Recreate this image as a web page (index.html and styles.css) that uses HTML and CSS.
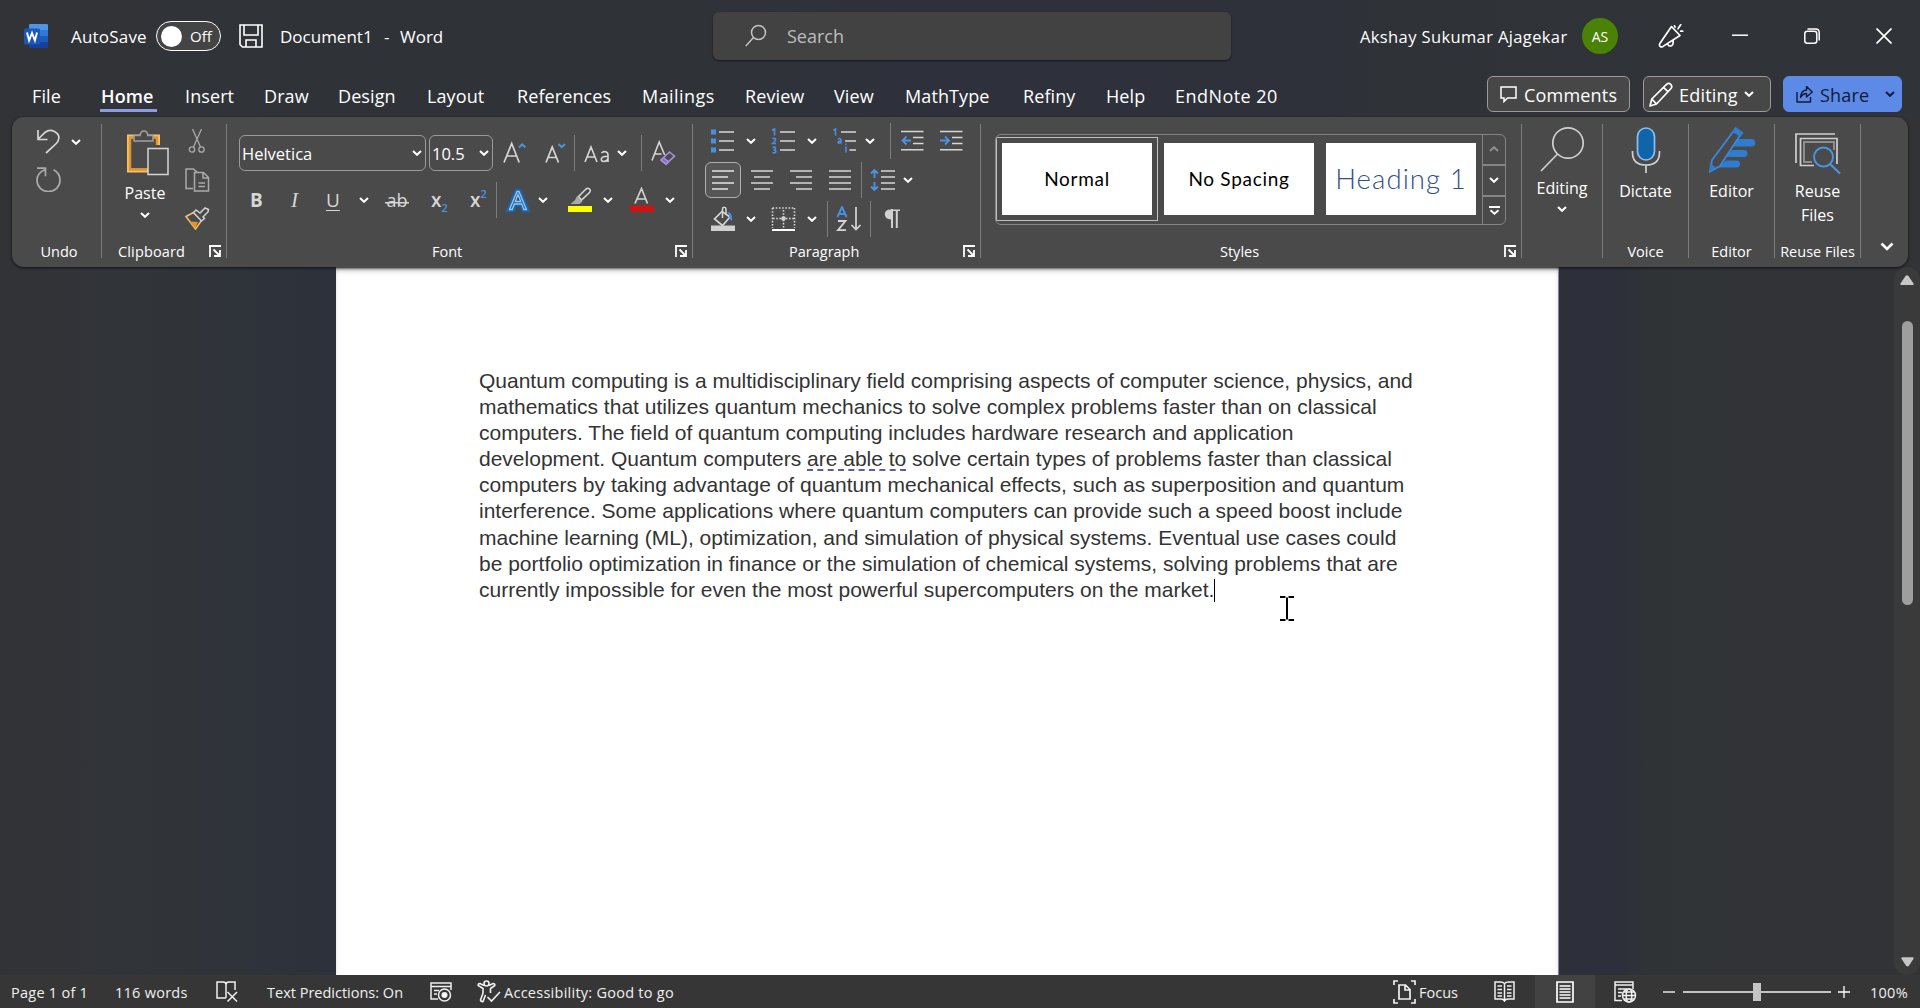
FILE: index.html
```html
<!DOCTYPE html>
<html lang="en">
<head>
<meta charset="utf-8">
<title>Document1 - Word</title>
<link rel="stylesheet" href="styles.css">
</head>
<body>
<svg class="defs" aria-hidden="true">
  <symbol id="chev" viewBox="0 0 10 6"><path d="M1 1l4 3.800L9 1" fill="none" stroke="currentColor" stroke-width="2"/></symbol>
  <symbol id="launch" viewBox="0 0 12 12"><path d="M1 12V1h11M4.500 4.500l5.500 5.500M11 5v6H5" fill="none" stroke="#fff" stroke-width="1.800"/></symbol>
</svg>

<header class="titlebar">
  <svg class="logo" width="24" height="24" viewBox="0 0 24 24"><path d="M6 0h17a1 1 0 0 1 1 1v5H5V1a1 1 0 0 1 1-1z" fill="#4f94e6"/><path d="M5 6h19v6H5z" fill="#2f7bd3"/><path d="M5 12h19v6H5z" fill="#1d5cbd"/><path d="M5 18h19v5a1 1 0 0 1-1 1H6a1 1 0 0 1-1-1z" fill="#173f9b"/><rect x="0" y="4.500" width="16" height="16" rx="1.500" fill="#1b58b4"/><path d="M3 8.500l2.100 8L8 9l2.900 7.500L13 8.500" fill="none" stroke="#fff" stroke-width="1.900"/></svg>
  <span class="autosave">AutoSave</span>
  <span class="toggle"><i></i><b>Off</b></span>
  <svg class="save" width="24" height="24" viewBox="0 0 24 24" fill="none" stroke="#fff" stroke-width="1.600"><path d="M1 1h22v22H3.500L1 20.500zM5 1v10h14V1M7 23v-7h10v7"/></svg>
  <span class="docname">Document1</span><span class="dash">-</span><span class="app">Word</span>
  <div class="search">
    <svg width="22" height="24" viewBox="0 0 22 24" fill="none" stroke="#c4c4c4" stroke-width="1.500"><circle cx="13.500" cy="8.500" r="7"/><path d="M8.500 13.500L.8 22"/></svg>
    <span>Search</span>
  </div>
  <span class="user">Akshay Sukumar Ajagekar</span>
  <span class="avatar">AS</span>
  <svg class="mega" width="26" height="26" viewBox="0 0 26 26" fill="none" stroke="#fff" stroke-width="1.700" stroke-linejoin="round" stroke-linecap="round"><path d="M13.500 3.500L2 20.200Q.8 22.500 2.300 23.600q1 .8 2.700-.2L22 12.500zM9.500 21q1.300 2.800 4 1.800 2.300-1.300 1.500-5.300M16.500 2.800l.6 1.200M22.700 1.800l-2.700 4M22.700 8.200h2"/></svg>
  <svg class="min" width="16" height="16" viewBox="0 0 16 16" stroke="#fff" stroke-width="1.500"><path d="M0 7.200h16"/></svg>
  <svg class="restore" width="16" height="16" viewBox="0 0 16 16" fill="none" stroke="#fff" stroke-width="1.500"><rect x=".8" y="3.200" width="12" height="12" rx="2.500"/><path d="M3.500 .9h8Q15.200.9 15.200 4.500v8"/></svg>
  <svg class="close" width="16" height="16" viewBox="0 0 16 16" stroke="#fff" stroke-width="1.700"><path d="M.5.500l15 15M15.500.500l-15 15"/></svg>
</header>

<nav class="tabs">
  <span>File</span><span class="active">Home</span><span>Insert</span><span>Draw</span><span>Design</span><span>Layout</span><span class="tight">References</span><span class="wide">Mailings</span><span>Review</span><span>View</span><span>MathType</span><span>Refiny</span><span>Help</span><span class="wide">EndNote 20</span>
  <div class="actions">
    <button class="btn comments"><svg width="17" height="17" viewBox="0 0 17 17" fill="none" stroke="#fff" stroke-width="1.500"><path d="M1 1h15v11H7.500L4 15.500V12H1z"/></svg><span>Comments</span></button>
    <button class="btn mode"><svg width="24" height="25" viewBox="0 0 24 25" fill="none" stroke="#fff" stroke-width="1.700" stroke-linejoin="round"><path d="M1 24l1.800-7L17.500 2.300q2.200-2 4.200 0t.3 4.200L7.500 22zM14.500 5.300l4.700 4.500M2.800 17l4.700 5"/></svg><span>Editing</span><svg class="chev"><use href="#chev"/></svg></button>
    <button class="btn share"><svg width="17" height="18" viewBox="0 0 17 18" fill="none" stroke="#0f1b38" stroke-width="1.400" stroke-linejoin="round"><path d="M1 7v10h13.500v-5M4.500 12.500Q5 5.500 10.500 5V1.500L16.300 7l-5.800 5V8.500Q7 8.500 4.500 12.500z"/></svg><span>Share</span><svg class="chev"><use href="#chev"/></svg></button>
  </div>
</nav>

<section class="ribbon">
  <div class="group g-undo">
    <div class="tools">
      <svg class="ic" width="25" height="26" viewBox="0 0 25 26" fill="none" stroke="#d6d6d6" stroke-width="1.700"><path d="M2 1v9.500h9.500M2.300 10L9 3.500Q13.500-.2 18.500 2.500t4.300 7q-.3 3-3 5.500L10 24"/></svg>
      <svg class="chev"><use href="#chev"/></svg>
      <svg class="ic redo" width="25" height="25" viewBox="0 0 25 25" fill="none" stroke="#aaa" stroke-width="1.700"><path d="M1 1.200h8.500v8M9.300 2.500Q1 5.500 1 13.500a11.500 11 0 0 0 23 0Q24 6 17.500 2.800"/></svg>
    </div>
    <div class="label"><span>Undo</span></div>
  </div>

  <div class="group g-clip">
    <div class="tools">
      <div class="paste">
        <svg width="42" height="46" viewBox="0 0 42 46" fill="none"><path d="M21 40.500H2V6.500h29V15" stroke="#f3c168" stroke-width="4"/><path d="M20 39.500H3V7.500h27V15" stroke="#e2942f" stroke-width="2.500"/><path d="M7 11V5.500h6Q13.500 1 17 1t3.800 4.500H26V11z" fill="#4a4a4a" stroke="#a0a0a0" stroke-width="1.500"/><rect x="21" y="18.500" width="20" height="26" fill="#4a4a4a" stroke="#d6d6d6" stroke-width="1.500"/></svg>
        <span>Paste</span><svg class="chev"><use href="#chev"/></svg>
      </div>
      <div class="clipcol">
        <svg width="24" height="24" viewBox="0 0 24 24" fill="none" stroke="#aaa" stroke-width="1.300"><path d="M7.500 0l8 18M16.500 0l-8 18"/><circle cx="7" cy="20.500" r="2.700"/><circle cx="16.500" cy="20.500" r="2.700"/></svg>
        <svg width="25" height="24" viewBox="0 0 25 24" fill="none" stroke="#aaa" stroke-width="1.500"><path d="M8 20.500H1V1h7.500l4 3.500M9.500 4.500h9l5 5V23h-14zM18 4.500V10h5.500M13.500 15h6.500M13.500 18.500h6.500"/></svg>
        <svg width="25" height="23" viewBox="0 0 25 23" fill="none"><path d="M1 9.500L8.500 5.500l8 8L10.500 22z" fill="#4a4a4a" stroke="#f3c168" stroke-width="1.500"/><path d="M4.500 14.500l8.500.5-2.700 6z" fill="#e2942f"/><path d="M8.500 5.500L11 3l4 3 5-5 3.500 1.500L23 5l-5 5 1.500 1.500-3 2.500z" fill="#4a4a4a" stroke="#d0d0d0" stroke-width="1.500"/></svg>
      </div>
    </div>
    <div class="label"><span>Clipboard</span><svg class="launch"><use href="#launch"/></svg></div>
  </div>

  <div class="group g-font">
    <div class="row fr1">
      <div class="combo"><span>Helvetica</span><svg class="chev"><use href="#chev"/></svg></div>
      <div class="combo sz"><span>10.5</span><svg class="chev"><use href="#chev"/></svg></div>
      <svg width="24" height="26" viewBox="0 0 24 26" fill="none" stroke="#d6d6d6" stroke-width="1.700"><path d="M1 22.500L8.700 3.500l7.500 19M3.700 16h10"/><path d="M16 7.500l3.200-3.200 3.200 3.200" stroke="#4a94e0" stroke-width="2"/></svg>
      <svg width="24" height="26" viewBox="0 0 24 26" fill="none" stroke="#d6d6d6" stroke-width="1.700"><path d="M1 22.500L7.200 7l6.300 15.500M3.300 17.500h8"/><path d="M13.500 4l3.200 3.200L20 4" stroke="#4a94e0" stroke-width="2"/></svg>
      <i class="sep"></i>
      <svg width="26" height="26" viewBox="0 0 26 26" fill="none" stroke="#d6d6d6" stroke-width="1.600"><path d="M1 22l6-15 6 15M3 17h8.300M17.500 13q1.500-1.800 4-1.200 2.500.6 2.500 3V22M24 16.200q-6-.2-6.700 2.800-.2 2.600 2.700 2.500 2.500 0 4-2.500"/></svg>
      <svg class="chev"><use href="#chev"/></svg>
      <i class="sep"></i>
      <svg width="26" height="26" viewBox="0 0 26 26" fill="none" stroke="#d6d6d6" stroke-width="1.600"><path d="M1 20.500L8.200 2l5.500 13M3.600 14h7"/><path d="M10 20l8.500-8 5 4.200-8.500 8z" stroke="#a491dc"/><path d="M10 20l2.500-2.300 5 4.200-2.500 2.300z" fill="#8268cc" stroke="#a491dc"/></svg>
    </div>
    <div class="row fr2">
      <b class="g">B</b><i class="g it">I</i><u class="g">U</u>
      <svg class="chev"><use href="#chev"/></svg>
      <span class="g ab">ab</span>
      <span class="g x">x<sub>2</sub></span>
      <span class="g x up">x<sup>2</sup></span>
      <i class="sep"></i>
      <svg width="24" height="25" viewBox="0 0 24 25" fill="none"><path d="M3.500 21.500L11 3.500h2L20.500 21.500h-2.700l-2-5.500H8.300l-2 5.500z" stroke="#1767b0" stroke-width="5.500"/><path d="M3.500 21.500L11 3.500h2L20.500 21.500h-2.700l-2-5.500H8.300l-2 5.500zM9.300 13.500h5.500L12 6.500z" stroke="#9cc8f2" stroke-width="1.300" fill="#1767b0"/></svg>
      <svg class="chev"><use href="#chev"/></svg>
      <svg width="26" height="26" viewBox="0 0 26 26" fill="none"><path d="M10.500 9.500L18 2q2-1.500 3.500 0t0 3.500L13.500 13z" stroke="#d6d6d6" stroke-width="1.600"/><path d="M9 9l5.500 5.500-3 2.500H2.500L7 13z" fill="#a9a9a9"/><path d="M0 19h24v6H0z" fill="#ff0"/></svg>
      <svg class="chev"><use href="#chev"/></svg>
      <svg width="26" height="26" viewBox="0 0 26 26" fill="none"><path d="M6 16.500L12.500 1.500l6 15M8.300 12h8.300" stroke="#d6d6d6" stroke-width="1.600"/><path d="M1 18.500h24V25H1z" fill="#cb1414"/></svg>
      <svg class="chev"><use href="#chev"/></svg>
    </div>
    <div class="label"><span>Font</span><svg class="launch"><use href="#launch"/></svg></div>
  </div>

  <div class="group g-para">
    <div class="row pr1">
      <svg width="24" height="24" viewBox="0 0 24 24"><path d="M1 .500h5v5H1zM1 9.500h5v5H1zM1 18.500h5v5H1z" fill="#4a8ee0"/><path d="M9 3h15M9 12h15M9 21h15" stroke="#d6d6d6" stroke-width="1.600"/></svg>
      <svg class="chev"><use href="#chev"/></svg>
      <svg width="25" height="26" viewBox="0 0 25 26" fill="none"><path d="M1 2.500L3.500 1v6.500M1.500 11q2-1.500 3 0 .5 1.500-3 4.500H5M1.500 19.500q3.200-1.200 3 .8 0 1.400-2 1.500 2.500.2 2.300 1.700-.4 2-3.500 1" stroke="#4a8ee0" stroke-width="1.600"/><path d="M9 4h15M9 13h15M9 22h15" stroke="#d6d6d6" stroke-width="1.600"/></svg>
      <svg class="chev"><use href="#chev"/></svg>
      <svg width="25" height="26" viewBox="0 0 25 26" fill="none"><path d="M1.500 2.500L3.500 1v6.500M6 11q3-1 3 1v3.500M9 13q-3 0-3 1.300 1 2 3 0M14 18.500v6M14 15.500v1.500" stroke="#4a8ee0" stroke-width="1.600"/><path d="M9 4h15M13 13h11M17.500 22H24" stroke="#d6d6d6" stroke-width="1.600"/></svg>
      <svg class="chev"><use href="#chev"/></svg>
      <i class="sep"></i>
      <svg width="23" height="24" viewBox="0 0 23 24" fill="none"><path d="M0 2.500h22.500M12 8.500h10.500M12 14.500h10.500M0 20.800h22.500" stroke="#d6d6d6" stroke-width="1.600"/><path d="M10 11.500H1.500M5.500 7.500l-4 4 4 4" stroke="#4a94e0" stroke-width="1.800"/></svg>
      <svg width="23" height="24" viewBox="0 0 23 24" fill="none"><path d="M0 2.500h22.500M12 8.500h10.500M12 14.500h10.500M0 20.800h22.500" stroke="#d6d6d6" stroke-width="1.600"/><path d="M0 11.500h9M5 7.500l4 4-4 4" stroke="#4a94e0" stroke-width="1.800"/></svg>
    </div>
    <div class="row pr2">
      <span class="sel"><svg width="22" height="22" viewBox="0 0 22 22" stroke="#e4e4e4" stroke-width="1.600"><path d="M0 2h22M0 8h16M0 14h22M0 20h16"/></svg></span>
      <svg width="22" height="22" viewBox="0 0 22 22" stroke="#d6d6d6" stroke-width="1.600"><path d="M0 2h22M3 8h16M0 14h22M3 20h16"/></svg>
      <svg width="22" height="22" viewBox="0 0 22 22" stroke="#d6d6d6" stroke-width="1.600"><path d="M0 2h22M6 8h16M0 14h22M6 20h16"/></svg>
      <svg width="22" height="22" viewBox="0 0 22 22" stroke="#d6d6d6" stroke-width="1.600"><path d="M0 2h22M0 8h22M0 14h22M0 20h22"/></svg>
      <i class="sep"></i>
      <svg width="25" height="24" viewBox="0 0 25 24" fill="none"><path d="M11 3h14M11 9h14M11 15h14M11 21h14" stroke="#d6d6d6" stroke-width="1.600"/><path d="M4.500 2v8M1 5.500L4.500 2 8 5.500M4.500 14v8M1 18.500L4.500 22 8 18.500" stroke="#4a94e0" stroke-width="1.900"/></svg>
      <svg class="chev"><use href="#chev"/></svg>
    </div>
    <div class="row pr3">
      <svg width="26" height="26" viewBox="0 0 26 26" fill="none"><path d="M12 5.500L4.500 13l8 6.500L20 11z" stroke="#d6d6d6" stroke-width="1.700"/><path d="M12.500 12V3q.2-2 2-1.700 1.500.2 1.500 2V8" stroke="#d6d6d6" stroke-width="1.500"/><path d="M17 6q6 0 5 9-3-1-3-6z" fill="#4a8ee0"/><path d="M1 19.500h24V25H1z" fill="#d0d0d0"/></svg>
      <svg class="chev"><use href="#chev"/></svg>
      <svg width="25" height="26" viewBox="0 0 25 26" fill="none" stroke="#d6d6d6" stroke-width="1.600"><path d="M1.500 2h22M1.500 2v20M23.500 2v20M12.500 4v18M2 12.500h21" stroke-dasharray="1.600 1.600"/><circle cx="12.500" cy="12.500" r="1.500"/><path d="M1 24h23" stroke="#fff" stroke-width="2"/></svg>
      <svg class="chev"><use href="#chev"/></svg>
      <i class="sep"></i>
      <svg width="26" height="26" viewBox="0 0 26 26" fill="none"><path d="M1.500 11L6 1l4.500 10M3 8h6.500" stroke="#4a8ee0" stroke-width="2"/><path d="M2 15h7.500L2 24.200h8" stroke="#d6d6d6" stroke-width="1.800"/><path d="M20 1v22.500M15.500 19l4.500 4.500L24.500 19" stroke="#d6d6d6" stroke-width="1.700"/></svg>
      <i class="sep"></i>
      <svg width="17" height="20" viewBox="0 0 17 20"><path d="M7 10.500Q.8 10.300.8 5.300T7 .500h9V2H7z" fill="#d0d0d0"/><path d="M7 0h2v19H7zM11.800 1h2v18h-2z" fill="#d0d0d0"/></svg>
    </div>
    <div class="label"><span>Paragraph</span><svg class="launch"><use href="#launch"/></svg></div>
  </div>

  <div class="group g-styles">
    <div class="gallery">
      <div class="pick"><div class="card">Normal</div></div>
      <div class="card c2">No Spacing</div>
      <div class="card c3">Heading 1</div>
      <div class="scroller">
        <span><svg class="chev dim up"><use href="#chev"/></svg></span>
        <span><svg class="chev"><use href="#chev"/></svg></span>
        <span><svg width="11" height="9" viewBox="0 0 11 9" fill="none" stroke="#fff" stroke-width="1.800"><path d="M0 1h11M1.500 4.200l4 3.500 4-3.500"/></svg></span>
      </div>
    </div>
    <div class="label"><span>Styles</span><svg class="launch"><use href="#launch"/></svg></div>
  </div>

  <div class="group big g-edit">
    <svg width="46" height="46" viewBox="0 0 46 46" fill="none" stroke="#d0d0d0" stroke-width="1.700"><circle cx="29" cy="17" r="15.200"/><path d="M18.500 28L2 45"/></svg>
    <span>Editing</span><svg class="chev"><use href="#chev"/></svg>
  </div>
  <div class="group big">
    <svg width="30" height="48" viewBox="0 0 30 48" fill="none"><rect x="6.500" y="2" width="17" height="32" rx="8.500" fill="#1065a8" stroke="#8fbdf0" stroke-width="1.700"/><path d="M1.500 25v1.500q0 12.500 13.500 12.500t13.500-12.500V25M15 39v8" stroke="#d0d0d0" stroke-width="1.700"/></svg>
    <span>Dictate</span>
    <div class="label"><span>Voice</span></div>
  </div>
  <div class="group big">
    <svg width="48" height="48" viewBox="0 0 48 48"><path d="M30 13h13.500a3.500 3.500 0 0 1 0 7.500H24zM24 24h12a3.500 3.500 0 0 1 0 7H18zM18 34.500h10.500a3.500 3.500 0 0 1 0 7H10z" fill="#2f7dd0"/><path d="M27.500 2.500l6 4.500L12 40 2 45.500 4 34z" fill="#4a4a4a" stroke="#3a88dc" stroke-width="1.800"/><path d="M27.500 1l8 5.500-3 4.500-8-5z" fill="#2f7dd0"/><path d="M2 37l5.500 4L1.500 46z" fill="#2f7dd0"/></svg>
    <span>Editor</span>
    <div class="label"><span>Editor</span></div>
  </div>
  <div class="group big">
    <svg width="46" height="48" viewBox="0 0 46 48" fill="none" stroke="#d0d0d0" stroke-width="1.700"><path d="M1 37V8h39M19 39.500H5.500V12.500H42V38"/><path d="M17 36H9V16h30v8" stroke="#8d8d8d" stroke-width="2"/><circle cx="28.500" cy="31" r="9.500" stroke="#4a94e0" stroke-width="1.900" fill="#4a4a4a"/><path d="M35 38l10 9.500" stroke="#4a94e0" stroke-width="2.200"/></svg>
    <span>Reuse<br>Files</span>
    <div class="label"><span>Reuse Files</span></div>
  </div>
  <div class="collapse"><svg width="14" height="9" viewBox="0 0 14 9"><path d="M1.500 1.500L7 7l5.500-5.500" fill="none" stroke="#fff" stroke-width="2.600"/></svg></div>
</section>

<main class="workspace">
  <article class="page">
    <p>Quantum computing is a multidisciplinary field comprising aspects of computer science, physics, and<br>mathematics that utilizes quantum mechanics to solve complex problems faster than on classical<br>computers. The field of quantum computing includes hardware research and application<br>development. Quantum computers <span class="gram">are able to</span> solve certain types of problems faster than classical<br>computers by taking advantage of quantum mechanical effects, such as superposition and quantum<br>interference. Some applications where quantum computers can provide such a speed boost include<br>machine learning (ML), optimization, and simulation of physical systems. Eventual use cases could<br>be portfolio optimization in finance or the simulation of chemical systems, solving problems that are<br>currently impossible for even the most powerful supercomputers on the market.<span class="caret"></span></p>
    <svg class="ibeam" width="14" height="25" viewBox="0 0 14 25" fill="none" stroke="#000" stroke-width="2"><path d="M0 1h5.500M8.500 1H14M7 1.500v22M0 24h5.500M8.500 24H14"/></svg>
  </article>
  <aside class="scroll">
    <svg width="14" height="10" viewBox="0 0 14 10"><path d="M5.500 1Q7-.700 8.500 1L13.500 8.500Q14 10 12.500 10h-11Q0 10 .5 8.500z" fill="#c6c6c6"/></svg>
    <div class="thumb"></div>
    <svg width="13" height="10" viewBox="0 0 14 10"><path d="M5.500 9Q7 10.700 8.500 9L13.500 1.500Q14 0 12.500 0h-11Q0 0 .5 1.500z" fill="#c6c6c6"/></svg>
  </aside>
</main>

<footer class="status">
  <span class="loose">Page 1 of 1</span>
  <span class="loose">116 words</span>
  <svg width="22" height="21" viewBox="0 0 22 21" fill="none" stroke="#f0f0f0" stroke-width="1.500"><path d="M10 17H1V1h6q3 0 3 2.500V17M10 3.500Q10 1 13 1h6v8M11.500 11l9.500 9.500M21 11l-9.500 9.500"/></svg>
  <span>Text Predictions: On</span>
  <svg width="22" height="20" viewBox="0 0 22 20" fill="none" stroke="#f0f0f0" stroke-width="1.500"><path d="M8 17H1V1h20v7M1 4.500h20M4 8.500h5M4 12h3"/><circle cx="14.500" cy="13" r="6"/><circle cx="14.500" cy="13" r="2.300" fill="#fff"/></svg>
  <svg width="24" height="23" viewBox="0 0 24 23" fill="none" stroke="#f0f0f0" stroke-width="1.600"><circle cx="9.500" cy="3.500" r="2.500"/><path d="M7 5.500L3 3.500Q.8 3.500 1.200 5.500L6 8.500V13L3.500 20Q4 22 6 21.500L8.500 15M12 5.500l4-2q2.200 0 1.800 2L13.500 8.500V13M10.500 17l4 4L23 12"/></svg>
  <span class="loose">Accessibility: Good to go</span>
  <svg width="23" height="24" viewBox="0 0 23 24" fill="none" stroke="#f0f0f0" stroke-width="1.700"><path d="M5 1H1v4M18 1h4v4M1 19v4h4M22 19v4h-4M6 5h6.500L17 9.500V19H6zM12 5v5h5"/></svg>
  <span>Focus</span>
  <svg width="21" height="21" viewBox="0 0 21 21" fill="none" stroke="#f0f0f0" stroke-width="1.500"><path d="M10.500 2.500Q9 1 6.500 1H1v17h6q2.500 0 3.500 2 1-2 3.500-2h6V1h-5.500q-2.500 0-4 1.500zM10.500 2.500V20M3.500 5h4.500M3.500 8.500h4.500M3.500 12h4.500M3.500 15h4.500M13 5h4.500M13 8.500h4.500M13 12h4.500M13 15h4.500"/></svg>
  <span class="s-print"><svg width="18" height="22" viewBox="0 0 18 22" fill="none" stroke="#fff" stroke-width="1.700"><path d="M1 1h16v20H1zM3.500 5h11M3.500 8h11M3.500 11h11M3.500 14h11M3.500 17h11"/></svg></span>
  <svg width="23" height="22" viewBox="0 0 23 22" fill="none" stroke="#f0f0f0" stroke-width="1.500"><path d="M8 19.500H1V1h18v7M1 4h18M4 8h9M4 11.500h4M4 15h3"/><circle cx="15" cy="14.500" r="6.500"/><ellipse cx="15" cy="14.500" rx="2.800" ry="6.500"/><path d="M8.500 14.500h13M10 11h10M10 18h10"/></svg>
  <svg width="12" height="12" viewBox="0 0 12 12" stroke="#fff" stroke-width="1.300"><path d="M0 6h12"/></svg>
  <span class="slider"><i></i></span>
  <svg width="12" height="12" viewBox="0 0 12 12" stroke="#fff" stroke-width="1.300"><path d="M0 6h12M6 0v12"/></svg>
  <span class="loose">100%</span>
</footer>
</body>
</html>
```
FILE: styles.css
```css
* { box-sizing: border-box; }
body {
  margin: 0; width: 1920px; height: 1008px; overflow: hidden;
  display: flex; flex-direction: column;
  font-family: "Open Sans", "Noto Sans", sans-serif; color: #fff;
  background: linear-gradient(90deg, #323337 0, #303439 190px, #2e323a 260px, #2d313b 340px, #2d303a 1625px, #2f3336 1645px, #323337 1800px);
}
svg { display: block; flex: none; }
.defs { width: 0; height: 0; position: absolute; }
.chev { width: 10px; height: 6px; color: #fff; }
.chev.up { transform: rotate(180deg); }
.chev.dim { color: #8f8f8f; }
span { white-space: nowrap; }

/* Title bar and tabs share one backdrop */
.titlebar, .tabs { background: linear-gradient(90deg, #323337 0, #2f3337 300px, #2f3338 700px, #2e313b 900px, #2e313a 1330px, #2f3236 1400px, #303337 1920px); }
.titlebar {
  height: 72px; flex: none; display: grid; align-items: center; font-size: 17px;
  grid-template-columns: 24px 47px 85px 83px 41px 104px 16px 313px 647px 222px 76px 74px 72px 72px 1fr;
}
.logo { grid-column: 2; }
.autosave { letter-spacing: .2px; }
.toggle { width: 65px; height: 30px; border: 1.500px solid #fff; border-radius: 15px; display: flex; align-items: center; gap: 8px; padding-left: 4px; background: #444; }
.toggle i { width: 21px; height: 21px; border-radius: 50%; background: #fff; }
.toggle b { font-weight: 400; font-size: 15px; }
.search { width: 518px; height: 48px; border-radius: 6px; background: #424242; display: flex; align-items: center; gap: 20px; padding-left: 32px; color: #bdbdbd; font-size: 18px; box-shadow: 0 1px 2px #15171a; }
.user { font-size: 16.500px; letter-spacing: .380px; }
.avatar { width: 36px; height: 36px; border-radius: 50%; background: #498205; font-size: 14px; display: flex; align-items: center; justify-content: center; }

/* Tabs */
.tabs {
  height: 45px; flex: none; display: grid; align-items: start; padding: 11px 0 0 32px; font-size: 18px; line-height: 27px; letter-spacing: .1px;
  grid-template-columns: 69px 84px 79px 74px 89px 90px 125px 103px 89px 71px 118px 83px 69px 312px auto;
}
.tabs > .active { font-weight: 600; width: 57px; margin-left: -1px; padding-left: 1px; height: 29px; border-bottom: 3px solid #8b9be4; letter-spacing: .1px; }
.tabs > .tight { letter-spacing: .1px; }
.tabs > .wide { letter-spacing: .450px; }
.actions { display: flex; margin-top: -7px; align-self: start; }
.btn { height: 36px; border: 1px solid #9a9a9a; border-radius: 6px; background: #474747; color: #fff; font: 400 18px/24px "Open Sans", sans-serif; letter-spacing: .2px; display: flex; align-items: center; padding: 0; }
.btn span { margin-top: 2px; }
.comments { width: 143px; padding-left: 12px; gap: 7px; }
.mode { width: 128px; margin-left: 13px; padding-left: 5px; gap: 6px; }
.share { width: 119px; margin-left: 12px; padding-left: 12px; gap: 7px; background: #5c8ae6; border-color: #5c8ae6; color: #0f1b38; }
.share .chev { color: #0f1b38; margin-left: 9px; }

/* Ribbon */
.ribbon { height: 150px; flex: none; margin: 0 12px; width: 1896px; border-radius: 12px; background: #4a4a4a; display: flex; padding: 7px 0 9px; box-shadow: 0 1px 3px #111; position: relative; z-index: 1; }
.group { height: 134px; border-right: 1px solid #7d7d7d; display: flex; flex-direction: column; flex: none; }
.label { margin-top: auto; height: 20px; margin-bottom: -3px; display: flex; align-items: center; justify-content: center; font-size: 14.500px; line-height: 20px; }
.label > span { padding-top: 2px; }
.launch { width: 12px; height: 12px; }
.label .launch { margin-left: auto; margin-right: 5px; }
.row { display: grid; align-items: center; }
.sep { width: 1px; height: 36px; background: #7d7d7d; }

.g-undo { width: 90px; }
.g-undo .tools { display: grid; grid-template-columns: 35px 20px; align-items: center; padding: 5px 0 0 24px; row-gap: 12px; }
.g-undo .label { padding-left: 5px; }
.g-clip { width: 125px; }
.g-clip .tools { display: flex; padding: 5px 0 0 23px; }
.g-clip .label > span { margin-left: 16px; letter-spacing: .150px; }
.paste { width: 40px; margin-right: 20px; display: flex; flex-direction: column; align-items: center; font-size: 16px; line-height: 22px; }
.paste > svg:first-child { margin: 1px 0 6px 6px; }
.paste .chev { margin-top: 8px; }
.clipcol { display: flex; flex-direction: column; gap: 15px; }

.g-font { width: 466px; padding-left: 12px; }
.fr1 { height: 36px; margin-top: 11px; grid-template-columns: 190px 74px 42px 29px 10px 33px 24px 10px 26px; }
.combo { width: 187px; height: 36px; border: 1px solid #9a9a9a; border-radius: 6px; display: flex; align-items: center; justify-content: space-between; padding: 0 3px 0 2px; font-size: 16.500px; }
.combo.sz { width: 64px; }
.fr2 { height: 36px; margin-top: 11px; padding-left: 6px; grid-template-columns: 38px 38px 38px 26px 44px 38px 29px 10px 32px 30px 35px 26px 36px 10px; }
.g { font-size: 19px; line-height: 30px; color: #d6d6d6; padding-left: 5px; text-underline-offset: 3px; }
.it { font-family: "Liberation Serif", serif; font-size: 21px; padding-left: 8px; }
.ab { font-size: 18px; width: 24px; line-height: 26px; text-align: center; padding: 0; background: linear-gradient(#d6d6d6, #d6d6d6) 0 15px / 100% 1.500px no-repeat; }
.x { font-weight: 600; padding-left: 2px; }
.x.up { padding-left: 3px; }
.x sub, .x sup { font-size: 11px; color: #4a94e0; line-height: 0; }
.x sup { vertical-align: 9px; }
.g-font .label > span { margin-left: 193px; }

.g-para { width: 288px; padding-left: 12px; }
.pr1, .pr2, .pr3 { height: 39px; }
.pr1 { margin-top: -3px; padding-left: 5px; grid-template-columns: 36px 25px 36px 25px 33px 25px 11px 39px 23px; }
.pr2 { grid-template-columns: 46px 39px 39px 32px 9px 33px 10px; }
.pr3 { padding-left: 5px; grid-template-columns: 36px 25px 36px 20px 9px 34px 14px 17px; }
.sel { width: 36px; height: 36px; border: 1px solid #b0b0b0; border-radius: 6px; background: #565656; display: flex; align-items: center; justify-content: center; }
.g-para .label > span { margin-left: 84px; }

.g-styles { width: 541px; padding-left: 14px; }
.gallery { width: 511px; height: 91px; margin-top: 10px; border: 1px solid #858585; border-radius: 6px; display: flex; align-items: center; overflow: hidden; }
.pick { width: 162px; height: 84px; border: 1px solid #c0c0c0; padding: 5px; margin-top: -1px; }
.card { width: 150px; height: 72px; background: #fff; color: #000; font: 400 19px/72px Lato, "Open Sans", sans-serif; letter-spacing: .7px; text-align: center; margin-top: -1px; }
.pick .card { margin-top: 0; }
.c2 { margin-left: 6px; }
.c3 { margin-left: 12px; font-size: 27.500px; font-weight: 300; color: #2f4f8c; letter-spacing: 1.100px; }
.scroller { width: 23px; height: 91px; margin-left: auto; border-left: 1px solid #858585; display: grid; grid-template-rows: repeat(3, 1fr); }
.scroller span { display: flex; align-items: center; justify-content: center; }
.scroller span + span { border-top: 2px solid #858585; }
.g-styles .label > span { margin-left: 225px; }

.big { width: 86px; align-items: center; padding-top: 2px; font-size: 16px; line-height: 24px; text-align: center; }
.big > svg:first-child { margin-bottom: 5px; }
.g-edit { width: 81px; }
.g-edit > svg:first-child { margin-bottom: 4px; }
.g-edit .chev { margin-top: 6px; }
.collapse { width: 47px; display: flex; align-items: flex-end; justify-content: center; padding: 0 0 7px 4px; }

/* Document area */
.workspace { height: 708px; flex: none; display: flex; padding-left: 336px; }
.page { width: 1223px; background: #fff; color: #333; padding: 101px 0 0 143px; position: relative; border-right: 1px solid #888; box-shadow: inset 0 5px 6px -3px #999; }
.page p { margin: 0; font: 400 21px/26.100px "Liberation Sans", Arial, sans-serif; white-space: nowrap; }
.gram { text-decoration: underline dashed 2px #5b5bb5; text-underline-offset: 3px; text-decoration-skip-ink: none; }
.caret { display: inline-block; width: 1px; height: 23px; background: #000; vertical-align: -5px; }
.ibeam { position: absolute; left: 944px; top: 329px; }
.scroll { width: 26px; margin-left: auto; background: #3a3a3a; border-radius: 13px; display: flex; flex-direction: column; align-items: center; padding: 8px 0; }
.thumb { width: 11px; height: 284px; border-radius: 6px; background: #9e9e9e; margin: 36px 0 auto; }

/* Status bar */
.status {
  height: 33px; flex: none; background: #363636; display: grid; align-items: center; font-size: 14.500px; padding-left: 11px; color: #f0f0f0;
  grid-template-columns: 104px 101px 51px 163px 47px 27px 889px 26px 75px 41px 79px 49px 20px 155px 32px auto;
}
.status > span { padding-top: 1px; }
.status > .loose { letter-spacing: .260px; }
.status > .s-print { width: 60px; height: 33px; padding: 0; background: #424242; display: flex; align-items: center; justify-content: center; }
.status > .slider { width: 148px; height: 20px; padding: 0; display: flex; align-items: center; justify-content: center; background: linear-gradient(#c4c4c4, #c4c4c4) center / 100% 2px no-repeat; }
.slider i { width: 8px; height: 18px; background: #c4c4c4; }
```
